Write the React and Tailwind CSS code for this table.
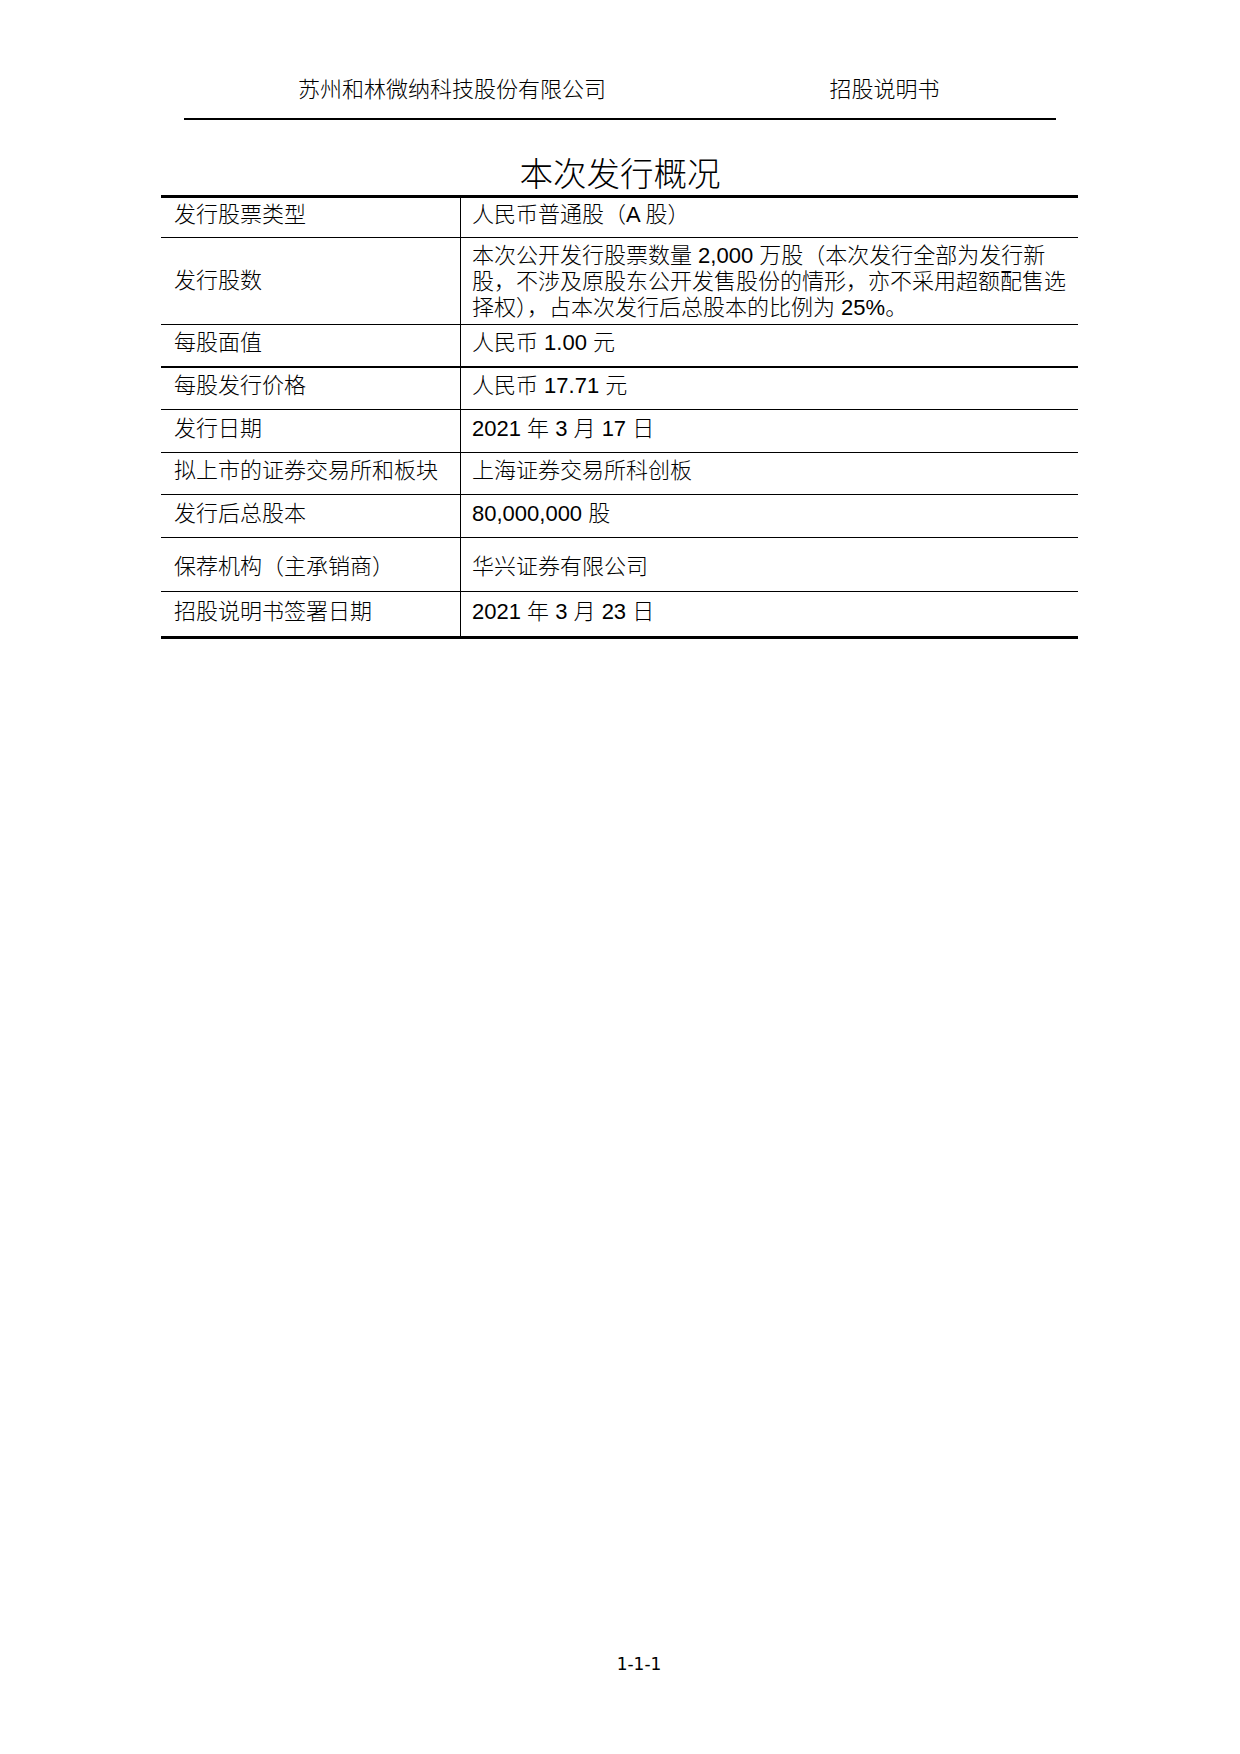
import React from 'react'

const rows = [
  { label: '发行股票类型', value: '人民币普通股（A 股）', h: 'h-[40px]' },
  {
    label: '发行股数',
    value: [
      '本次公开发行股票数量 2,000 万股（本次发行全部为发行新',
      '股，不涉及原股东公开发售股份的情形，亦不采用超额配售选',
      '择权），占本次发行后总股本的比例为 25%。',
    ],
    h: 'h-[87px]',
  },
  { label: '每股面值', value: '人民币 1.00 元', h: 'h-[43px]', thick: true },
  { label: '每股发行价格', value: '人民币 17.71 元', h: 'h-[42px]' },
  { label: '发行日期', value: '2021 年 3 月 17 日', h: 'h-[43px]' },
  { label: '拟上市的证券交易所和板块', value: '上海证券交易所科创板', h: 'h-[42px]' },
  { label: '发行后总股本', value: '80,000,000 股', h: 'h-[43px]' },
  { label: '保荐机构（主承销商）', value: '华兴证券有限公司', h: 'h-[54px]', low: true },
  { label: '招股说明书签署日期', value: '2021 年 3 月 23 日', h: 'h-[44px]', last: true },
]

function Row({ label, value, h, thick, last, low }) {
  const border = last ? '' : thick ? 'border-b-2 border-black' : 'border-b border-black'
  const multi = Array.isArray(value)
  const pad = multi ? '' : low ? 'pt-[4px]' : 'pb-[5px]'
  return (
    <div className={`flex ${h} ${border}`}>
      <div className={`flex w-[300px] shrink-0 items-center border-r border-black pl-[13px] ${pad}`}>
        {label}
      </div>
      <div className={`flex flex-1 items-center pl-[11px] ${pad}`}>
        {multi ? (
          <div className="pt-[2px] leading-[26px] whitespace-nowrap">
            {value.map((line) => (
              <div key={line}>{line}</div>
            ))}
          </div>
        ) : (
          <span className="whitespace-nowrap">{value}</span>
        )}
      </div>
    </div>
  )
}

export default function App() {
  return (
    <div
      className="min-h-[1754px] w-[1240px] bg-white pt-[77px] font-light text-black"
      style={{ fontFamily: '"Liberation Sans", "Noto Sans CJK SC", sans-serif' }}
    >
      <header className="ml-[184px] w-[872px]">
        <div className="flex h-[26px] text-[22px] leading-[26px]">
          <div className="w-[536px] text-center">苏州和林微纳科技股份有限公司</div>
          <div className="w-[329px] text-center">招股说明书</div>
        </div>
        <div className="mt-[15px] border-t-2 border-black" />
      </header>

      <h1 className="mt-[37px] text-center text-[33.5px] font-light leading-[36px]">本次发行概况</h1>

      <div className="mt-[2px] ml-[161px] w-[917px] border-t-[3px] border-b-[3px] border-black text-[22px] leading-[26px]">
        {rows.map((r) => (
          <Row key={r.label} {...r} />
        ))}
      </div>

      <div
        className="mt-[1013px] pl-[38px] text-center text-[17px] font-normal leading-[24px]"
        style={{ fontFamily: '"DejaVu Sans", sans-serif' }}
      >
        1-1-1
      </div>
    </div>
  )
}
